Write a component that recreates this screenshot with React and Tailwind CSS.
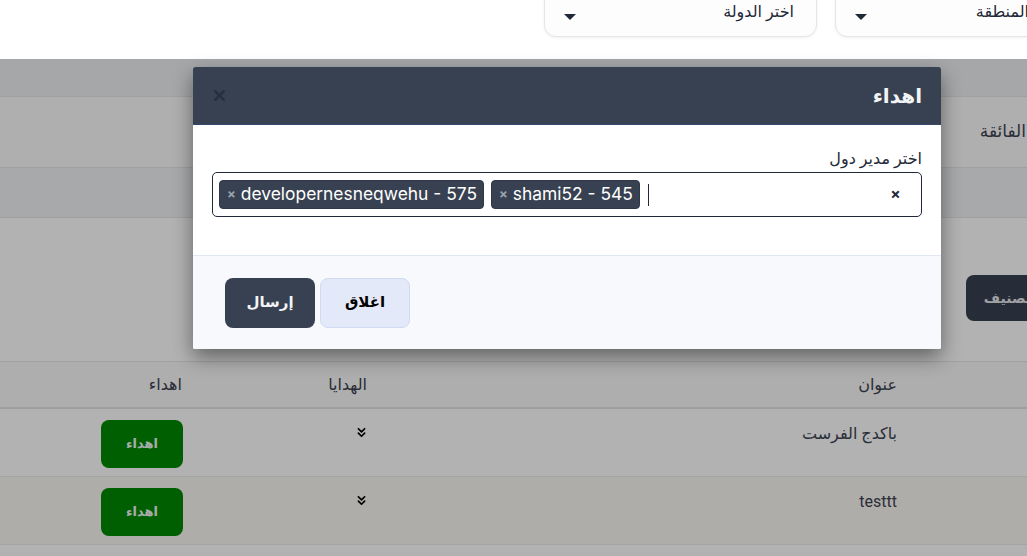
import { ChevronsDown, X } from "lucide-react";

const rows = [
  { id: 1, title: "باكدج الفرست", striped: false },
  { id: 2, title: "testtt", striped: true },
];

const SelectBox = ({ label, width }) => (
  <div
    className={`-mt-[13px] flex h-[50px] shrink-0 items-center justify-between rounded-xl border border-[#e3e6ea] bg-[#fdfdfe] pl-[19px] pr-[22px] shadow-[0_1px_3px_rgba(0,0,0,0.06)] ${width}`}
  >
    <span className="text-[16px] font-medium text-[#1f2937]">{label}</span>
    <span className="mt-[10px] h-0 w-0 border-x-[6px] border-t-[6px] border-x-transparent border-t-[#1f2937]" />
  </div>
);

const Chip = ({ text }) => (
  <span className="flex h-[29px] items-center gap-[5px] rounded-[4px] border border-[#2f3846] bg-[#374151] pl-[7px] pr-[6px] font-['Inter',sans-serif] text-[17.4px] text-white">
    <span className="text-[13px] font-bold text-[#9ca3af]">×</span>
    {text}
  </span>
);

export default function App() {
  return (
    <div
      dir="rtl"
      className="relative h-[556px] w-[1027px] overflow-hidden bg-white font-['Roboto','DejaVu_Sans',sans-serif] text-[#3c4250]"
    >
      {/* top filter bar, stays above the backdrop */}
      <header className="relative z-20 flex h-[59px] gap-[18px] bg-white -mr-[25px]">
        <SelectBox label="المنطقة" width="w-[217px]" />
        <SelectBox label="اختر الدولة" width="w-[273px]" />
      </header>

      <main>
        <div className="h-[38px] border-b border-[#e4e5e7] bg-[#eef0f2]" />
        <div className="flex h-[71px] items-center border-b border-[#e4e5e7] bg-[#fbfbfb] pr-[1px] text-[17px]">
          الفائقة
        </div>
        <div className="h-[50px] border-b border-[#e4e5e7] bg-[#f1f3f5]" />
        <div className="h-[144px] border-b border-[#e4e5e7] bg-white pt-[57px]">
          <button className="-mr-[22px] h-[46px] rounded-lg bg-[#374151] px-[18px] text-[14px] font-semibold text-[#e5e7eb]">
            تصنيف
          </button>
        </div>

        <div className="grid h-[47px] grid-cols-[118px_530px_185px_194px] items-center border-b-2 border-[#e2e2e4] bg-[#f8f9f8] text-[16px] font-medium">
          <div />
          <div className="pr-[12px]">عنوان</div>
          <div className="pr-[12px]">الهدايا</div>
          <div className="pr-[12px]">اهداء</div>
        </div>

        {rows.map((row) => (
          <div
            key={row.id}
            className={`grid h-[68px] grid-cols-[118px_530px_185px_194px] items-start border-b border-[#edecef] ${
              row.striped ? "bg-[#fbf8f4]" : "bg-white"
            }`}
          >
            <div />
            <div className="pr-[12px] pt-[13px] text-[16px] font-normal leading-6">{row.title}</div>
            <div className="pr-[10px] pt-[16px]">
              <ChevronsDown className="h-[15px] w-[15px] text-black" strokeWidth={2.75} />
            </div>
            <div className="pr-[11px] pt-[11px]">
              <button className="h-[48px] w-[82px] rounded-lg bg-[#008800] text-[13px] font-bold text-[#f0f6f6]">
                اهداء
              </button>
            </div>
          </div>
        ))}
        <div className="h-[40px] bg-white" />
      </main>

      {/* backdrop */}
      <div className="absolute inset-x-0 bottom-0 top-[59px] z-10 bg-black/30" />

      {/* gift dialog */}
      <div className="absolute left-[193px] top-[67px] z-30 w-[748px] overflow-hidden rounded-[2px] bg-white shadow-[0_8px_20px_rgba(0,0,0,0.45)]">
        <div className="flex h-[58px] items-center justify-between border-b border-[#34496b] bg-[#374151] pl-[18px] pr-[19px]">
          <h2 className="text-[20px] font-bold text-[#f3f4f6]">اهداء</h2>
          <X className="h-[17px] w-[17px] text-[#27303c]" strokeWidth={3.5} />
        </div>

        <div className="px-[19px] pb-[38px] pt-[22px]">
          <label className="mb-[1px] block text-[16px] text-[#1f2937]">اختر مدير دول</label>
          <div
            dir="ltr"
            className="flex h-[45px] items-center gap-[7px] rounded-[5px] border border-[#1f2937] pl-[6px] pr-[21px]"
          >
            <Chip text="developernesneqwehu - 575" />
            <Chip text="shami52 - 545" />
            <span className="ml-[1px] h-[22px] w-px bg-[#1f2937]" />
            <span className="ml-auto text-[17px] font-bold text-[#1f2937]">×</span>
          </div>
        </div>

        <div className="flex h-[94px] items-center justify-end gap-[5px] border-t border-[#e2e8f3] bg-[#f7f9fc] pl-[32px]">
          <button className="h-[50px] w-[90px] rounded-lg border border-[#d0daf3] bg-[#e3e9f8] text-[15px] font-bold text-black">
            اغلاق
          </button>
          <button className="h-[50px] w-[90px] rounded-lg bg-[#374151] text-[15px] font-bold text-[#f3f4f6]">
            إرسال
          </button>
        </div>
      </div>
    </div>
  );
}
